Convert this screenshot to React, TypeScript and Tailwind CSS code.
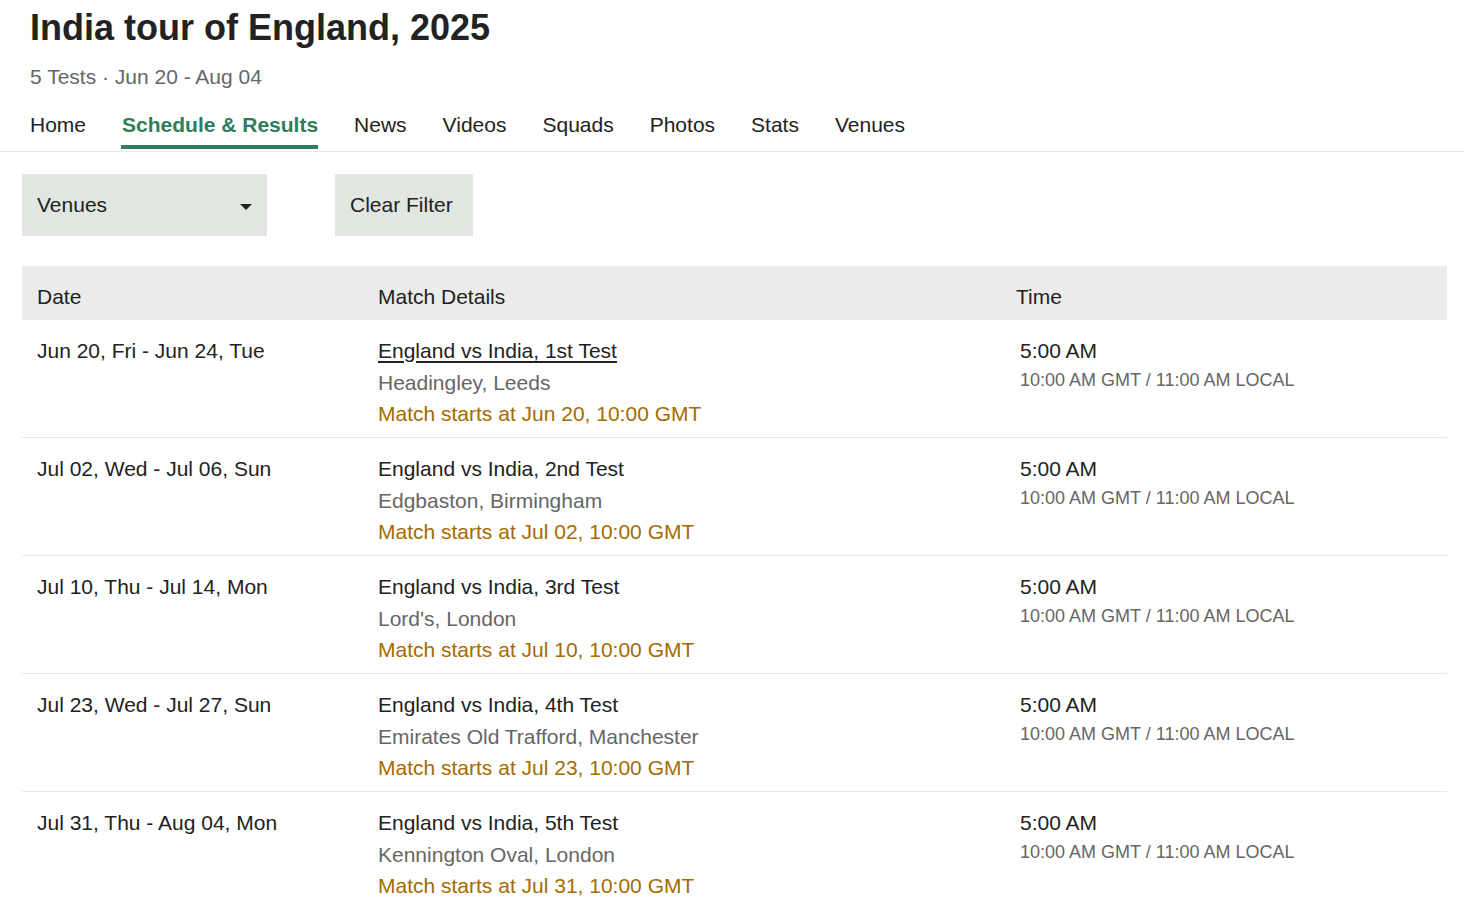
import React from 'react';

type Match = {
  date: string;
  title: string;
  venue: string;
  starts: string;
  link?: boolean;
};

const matches: Match[] = [
  { date: 'Jun 20, Fri - Jun 24, Tue', title: 'England vs India, 1st Test', venue: 'Headingley, Leeds', starts: 'Match starts at Jun 20, 10:00 GMT', link: true },
  { date: 'Jul 02, Wed - Jul 06, Sun', title: 'England vs India, 2nd Test', venue: 'Edgbaston, Birmingham', starts: 'Match starts at Jul 02, 10:00 GMT' },
  { date: 'Jul 10, Thu - Jul 14, Mon', title: 'England vs India, 3rd Test', venue: "Lord's, London", starts: 'Match starts at Jul 10, 10:00 GMT' },
  { date: 'Jul 23, Wed - Jul 27, Sun', title: 'England vs India, 4th Test', venue: 'Emirates Old Trafford, Manchester', starts: 'Match starts at Jul 23, 10:00 GMT' },
  { date: 'Jul 31, Thu - Aug 04, Mon', title: 'England vs India, 5th Test', venue: 'Kennington Oval, London', starts: 'Match starts at Jul 31, 10:00 GMT' },
];

const tabs = ['Home', 'Schedule & Results', 'News', 'Videos', 'Squads', 'Photos', 'Stats', 'Venues'];

export default function App() {
  return (
    <div className="min-h-screen bg-white text-[#222] font-['Liberation_Sans',Arial,sans-serif]">
      {/* Series header */}
      <div className="px-[30px] pt-[6px]">
        <h1 className="text-[36px] leading-[44px] font-bold">India tour of England, 2025</h1>
        <p className="mt-[13px] text-[21px] leading-[28px] text-[#666]">5 Tests · Jun 20 - Aug 04</p>
      </div>

      {/* Tabs */}
      <nav className="mt-[20px] border-b border-[#e6e6e6]">
        <ul className="flex gap-[36px] px-[30px] pb-[2px]">
          {tabs.map((tab) => {
            const active = tab === 'Schedule & Results';
            return (
              <li
                key={tab}
                className={
                  active
                    ? 'text-[21px] leading-[28px] pb-[6px] font-bold text-[#2e7d5b] border-b-4 border-[#2e7d5b] -ml-px pl-px'
                    : 'text-[21px] leading-[28px] pb-[10px]'
                }
              >
                {tab}
              </li>
            );
          })}
        </ul>
      </nav>

      {/* Filters */}
      <div className="flex gap-[68px] pl-[22px] pt-[22px]">
        <button className="flex h-[62px] w-[245px] items-center justify-between bg-[#e1e6e0] px-[15px] text-[21px]">
          <span>Venues</span>
          <svg width="12" height="6" viewBox="0 0 12 6" className="mt-[3px]">
            <path d="M0 0 L12 0 L6 6 Z" fill="#222" />
          </svg>
        </button>
        <button className="h-[62px] bg-[#e1e6e0] pl-[15px] pr-[20px] text-[21px]">Clear Filter</button>
      </div>

      {/* Schedule table */}
      <div className="ml-[22px] mr-[17px] mt-[30px]">
        <div className="grid h-[54px] grid-cols-[341px_638px_1fr] items-center bg-[#ebebeb] pt-[7px] text-[21px]">
          <div className="pl-[15px]">Date</div>
          <div className="pl-[15px]">Match Details</div>
          <div className="pl-[15px]">Time</div>
        </div>
        {matches.map((m) => (
          <div
            key={m.title}
            className="grid h-[118px] grid-cols-[341px_638px_1fr] border-b border-[#e8e8e8] pt-[15px] text-[21px] leading-[31.5px]"
          >
            <div className="pl-[15px]">{m.date}</div>
            <div className="pl-[15px]">
              <div className={m.link ? 'underline underline-offset-[3px] decoration-[1.5px]' : ''}>{m.title}</div>
              <div className="text-[#666]">{m.venue}</div>
              <div className="text-[#a56b00]">{m.starts}</div>
            </div>
            <div className="pl-[19px]">
              <div>5:00 AM</div>
              <div className="text-[18px] leading-[26px] text-[#666]">10:00 AM GMT / 11:00 AM LOCAL</div>
            </div>
          </div>
        ))}
      </div>
    </div>
  );
}
